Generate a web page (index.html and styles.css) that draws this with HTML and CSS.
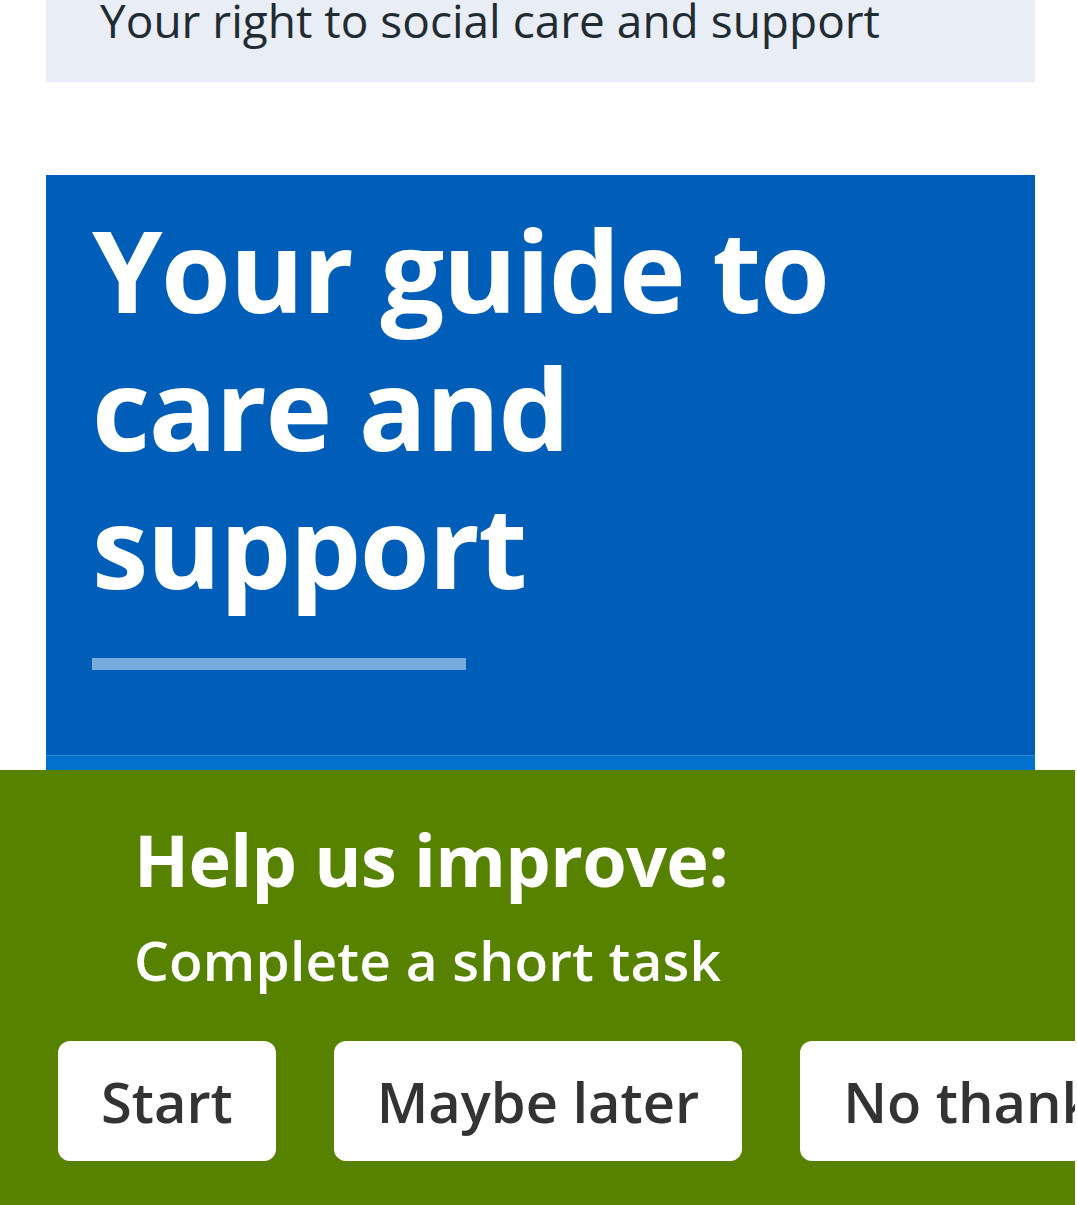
FILE: index.html
```html
<!DOCTYPE html>
<html lang="en">
<head>
<meta charset="utf-8">
<title>Your guide to care and support</title>
<link rel="stylesheet" href="styles.css">
</head>
<body>
<div class="page">
  <div class="related">
    <p class="related-link">Your right to social care and support</p>
  </div>
  <section class="hero">
    <h1 class="hero-title">Your guide to care and support</h1>
    <div class="hero-bar"></div>
  </section>
  <div class="strip"></div>
</div>
<div class="survey">
  <h2 class="survey-title">Help us improve:</h2>
  <p class="survey-sub">Complete a short task</p>
  <div class="survey-actions">
    <button class="survey-btn">Start</button>
    <button class="survey-btn">Maybe later</button>
    <button class="survey-btn">No thanks</button>
  </div>
</div>
</body>
</html>
```

FILE: styles.css
```css
html, body {
  margin: 0;
  padding: 0;
  background: #ffffff;
  overflow: hidden;
}
body {
  font-family: "Open Sans", "Noto Sans", sans-serif;
  width: 1077px;
  height: 1205px;
}
.page {
  margin: 0 42px 0 46px;
}
.related {
  display: flow-root;
  background: #e8edf6;
  padding: 0 0 0 54px;
  height: 82px;
  box-sizing: border-box;
}
.related-link {
  margin: -10px 0 0 0;
  font-size: 46px;
  line-height: 60px;
  font-weight: 400;
  color: #212b32;
  white-space: nowrap;
}
.hero {
  margin-top: 93px;
  background: #005eb8;
  padding: 25px 46px 85px 46px;
}
.hero-title {
  margin: 0;
  color: #ffffff;
  font-size: 113px;
  line-height: 138px;
  font-weight: 700;
  letter-spacing: -1.4px;
  max-width: 780px;
}
.hero-bar {
  margin-top: 44px;
  width: 374px;
  height: 12px;
  background: #76abdb;
}
.strip {
  height: 15px;
  background: #0072ce;
  border-top: 1px solid #2d88d6;
  box-sizing: border-box;
}
.survey {
  width: 1075px;
  height: 435px;
  background: #578200;
  box-sizing: border-box;
  padding: 42px 0 0 58px;
  overflow: hidden;
}
.survey-title {
  margin: 0 0 0 76px;
  color: #ffffff;
  font-size: 72px;
  line-height: 94px;
  font-weight: 700;
  letter-spacing: -0.7px;
}
.survey-sub {
  margin: 22px 0 0 76px;
  color: #ffffff;
  font-size: 55px;
  line-height: 64px;
  font-weight: 600;
  letter-spacing: 0.2px;
}
.survey-actions {
  display: flex;
  gap: 58px;
  margin-top: 49px;
  white-space: nowrap;
}
.survey-btn {
  flex: none;
  height: 120px;
  padding: 0 43px;
  border: none;
  border-radius: 12px;
  background: #ffffff;
  color: #333333;
  font-family: "Open Sans", "Noto Sans", sans-serif;
  font-size: 56px;
  line-height: 120px;
  font-weight: 600;
}
```
